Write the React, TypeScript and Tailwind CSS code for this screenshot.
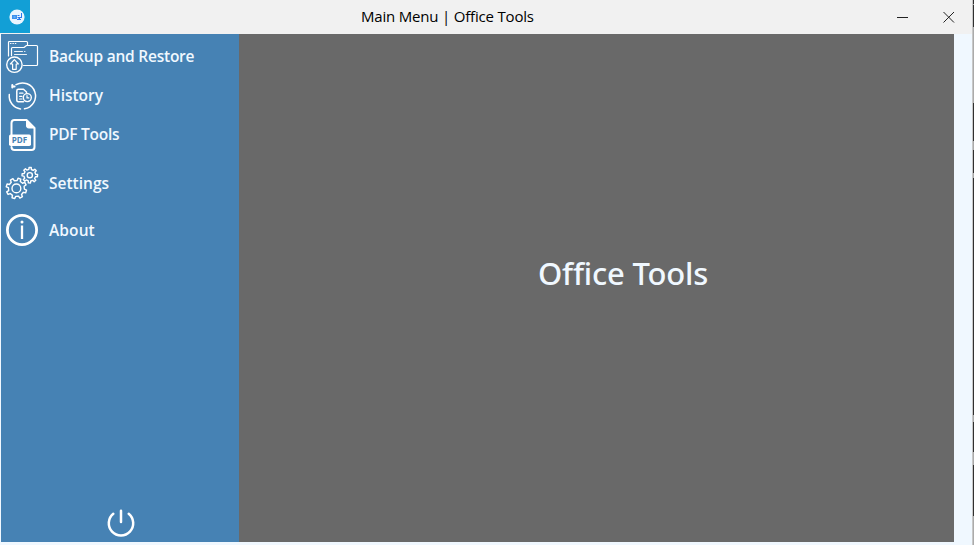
import type { ReactNode } from "react";

function gearPath(cx: number, cy: number, outer: number, root: number, teeth: number, phase: number) {
  const pts: string[] = [];
  const step = (Math.PI * 2) / teeth;
  for (let i = 0; i < teeth; i++) {
    const a = i * step + phase;
    const corners: [number, number][] = [
      [-0.27, root],
      [-0.18, outer],
      [0.18, outer],
      [0.27, root],
    ];
    for (const [t, r] of corners) {
      pts.push(`${(cx + r * Math.cos(a + t * step)).toFixed(2)} ${(cy + r * Math.sin(a + t * step)).toFixed(2)}`);
    }
  }
  return `M${pts.join("L")}Z`;
}

function BackupIcon() {
  return (
    <svg width="34" height="34" viewBox="0 0 34 34" fill="none" stroke="#fff" strokeWidth="1.2" strokeLinejoin="round" strokeLinecap="round">
      <path d="M3.5 16V2.5Q3.5 1.5 4.5 1.5H21.5Q22.5 1.5 22.5 2.5V4.5" />
      <path d="M5.5 3.5H6M7.9 3.5H8.4M10.3 3.5H10.8" />
      <path d="M6.5 15.5V8.5Q6.5 7.5 7.5 7.5H19L21.5 5.5H31.5Q32.5 5.5 32.5 6.5V24.5Q32.5 25.5 31.5 25.5H18.5" />
      <path d="M9.5 11.5H17.5M19.5 11.5H20M9.5 14.5H21.5" strokeWidth=".9" />
      <circle cx="9.4" cy="24.7" r="7.7" strokeWidth="1.4" fill="#4682b4" />
      <path d="M9.4 19.7L13.4 24H11.2V29.3H7.6V24H5.4Z" />
    </svg>
  );
}

function HistoryIcon() {
  return (
    <svg width="34" height="34" viewBox="0 0 34 34" fill="none" stroke="#fff" strokeWidth="1.5" strokeLinejoin="round" strokeLinecap="round">
      <path d="M11 5.7A13 13 0 1 1 19.5 29.8M15.5 29.9A13 13 0 0 1 4.3 15.5" />
      <path d="M7.3 6V8.4M9.6 7.4H7.3" strokeWidth="2" />
      <path d="M18.5 22.8H13.3Q11.8 22.8 11.8 21.3V12Q11.8 10.3 13.3 10.3H18.5L21.5 13V14" />
      <path d="M14.6 14.2H18M14.6 17.3H17M14.6 20H17" strokeWidth="1.2" />
      <circle cx="22.3" cy="18.6" r="4" fill="#4682b4" strokeWidth="1.4" />
      <path d="M22 16.5V18.9H23.8" strokeWidth="1.2" />
    </svg>
  );
}

function PdfIcon() {
  return (
    <svg width="34" height="34" viewBox="0 0 34 34" fill="none" stroke="#fff" strokeWidth="2" strokeLinejoin="round" strokeLinecap="round">
      <path d="M6.5 18V5Q6.5 2 9.5 2H21.5L29.5 10V29Q29.5 32 26.5 32H9.5Q6.5 32 6.5 29" />
      <path d="M21.5 2V8Q21.5 10 23.5 10H29.5Z" fill="#fff" strokeWidth="1" />
      <rect x="4" y="16.5" width="22" height="11.5" rx="1.8" fill="#fff" stroke="none" />
      <text x="6.8" y="25.3" textLength="15.5" lengthAdjust="spacingAndGlyphs" fill="#4682b4" stroke="none" className="font-['Open_Sans',sans-serif] text-[8px] font-bold">PDF</text>
    </svg>
  );
}

function SettingsIcon() {
  return (
    <svg width="34" height="34" viewBox="0 0 34 34" fill="none" stroke="#fff" strokeWidth="1.4" strokeLinejoin="round">
      <path d={gearPath(11.4, 22.4, 10.3, 8, 8, 0.3)} />
      <circle cx="11.4" cy="22.4" r="4.4" />
      <path d={gearPath(24.8, 9.2, 7.8, 5.9, 8, 0.05)} />
      <circle cx="24.8" cy="9.2" r="2.6" />
    </svg>
  );
}

function AboutIcon() {
  return (
    <svg width="34" height="34" viewBox="0 0 34 34" fill="none" stroke="#fff">
      <circle cx="17" cy="17" r="14.6" strokeWidth="2.8" />
      <path d="M17 12.5V26" strokeWidth="2.3" />
      <circle cx="17" cy="9" r="1.5" fill="#fff" stroke="none" />
    </svg>
  );
}

function MenuItem({ icon, label, row, text }: { icon: ReactNode; label: string; row: string; text: string }) {
  return (
    <button className={`flex w-full items-center gap-[10px] pl-1 text-left ${row}`}>
      {icon}
      <span className={`whitespace-nowrap font-['Open_Sans','Noto_Sans',sans-serif] text-[15.5px] font-semibold leading-6 text-[#f0f8ff] ${text}`}>{label}</span>
    </button>
  );
}

export default function App() {
  return (
    <div className="flex h-[545px] w-[974px] overflow-hidden bg-[#f0f8ff]">
      <div className="flex w-[972px] flex-col">
        <header className="flex h-[34px] shrink-0 items-start bg-[#f1f1f1]">
          <div className="flex h-[33px] w-[30px] items-center justify-center bg-[#129fd6] pl-1">
            <svg width="16" height="16" viewBox="0 0 16 16">
              <circle cx="8" cy="8" r="7.6" fill="#eaf5ff" />
              <path d="M3 6H8V10H3Z" fill="#3c91ef" />
              <path d="M8.5 6H10.5V7H8.5ZM8.5 8H12V4H13V9H11V10H12V11H8V10H9.5V9H8.5Z" fill="#2879ed" />
              <path d="M4.5 8H6.5" stroke="#8fc4fb" />
            </svg>
          </div>
          <h1 className="ml-[331px] w-[174px] whitespace-nowrap pt-1 font-['Open_Sans','Noto_Sans',sans-serif] text-[15px] leading-6 tracking-[-0.19px] text-black">Main Menu | Office Tools</h1>
          <div className="ml-auto flex h-[34px] items-center gap-[35px] pr-[17px]">
            <svg width="12" height="12" viewBox="0 0 12 12" shapeRendering="crispEdges"><path d="M1 6.5H12" stroke="#222" /></svg>
            <svg width="12" height="12" viewBox="0 0 12 12"><path d="M.5 1L11 11.5M11 1L.5 11.5" stroke="#222" strokeWidth="1" /></svg>
          </div>
        </header>
        <div className="flex h-[508px] pl-px pr-[18px]">
          <aside className="flex w-[238px] flex-col bg-[#4682b4] pt-0.5">
            <MenuItem icon={<BackupIcon />} label="Backup and Restore" row="h-[42px]" text="-mt-[3px] tracking-[-0.23px]" />
            <MenuItem icon={<HistoryIcon />} label="History" row="h-9" text="-mt-[3px] tracking-[-0.02px]" />
            <MenuItem icon={<PdfIcon />} label="PDF Tools" row="h-[42px]" text="-mt-[3px] tracking-[-0.28px]" />
            <MenuItem icon={<SettingsIcon />} label="Settings" row="h-[54px]" text="" />
            <MenuItem icon={<AboutIcon />} label="About" row="h-10" text="tracking-[0.1px]" />
            <button className="mb-1 ml-[105px] mt-auto w-[30px]" aria-label="Exit">
              <svg width="30" height="30" viewBox="0 0 30 30" fill="none" stroke="#fff" strokeWidth="2.5" strokeLinecap="round">
                <path d="M7.3 5.8A12.2 12.2 0 1 0 22.7 5.8M15 2.8V14" />
              </svg>
            </button>
          </aside>
          <main className="flex flex-1 items-center justify-center bg-[#696969] pb-[30px] pl-[53px]">
            <h2 className="whitespace-nowrap font-['Noto_Sans','Open_Sans',sans-serif] text-[31px] font-medium leading-10 tracking-[-0.2px] text-[#f0f8ff]">Office Tools</h2>
          </main>
        </div>
      </div>
      <div className="w-px bg-[#c8c8c8]" />
      <div className="flex w-px flex-col bg-[#303030]">
        <i className="h-1 bg-[#303030]" />
        <i className="h-px bg-[#aaa]" />
        <i className="h-[22px] bg-[#303030]" />
        <i className="h-[76px] bg-[#aaa]" />
        <i className="h-[38px] bg-[#303030]" />
        <i className="h-[9px] bg-[#aaa]" />
        <i className="h-[23px] bg-[#303030]" />
        <i className="h-[5px] bg-[#aaa]" />
        <i className="h-[237px] bg-[#303030]" />
        <i className="h-[7px] bg-[#aaa]" />
        <i className="h-[30px] bg-[#303030]" />
        <i className="h-[13px] bg-[#aaa]" />
        <i className="h-[51px] bg-[#303030]" />
        <i className="flex-1 bg-[#aaa]" />
      </div>
    </div>
  );
}
